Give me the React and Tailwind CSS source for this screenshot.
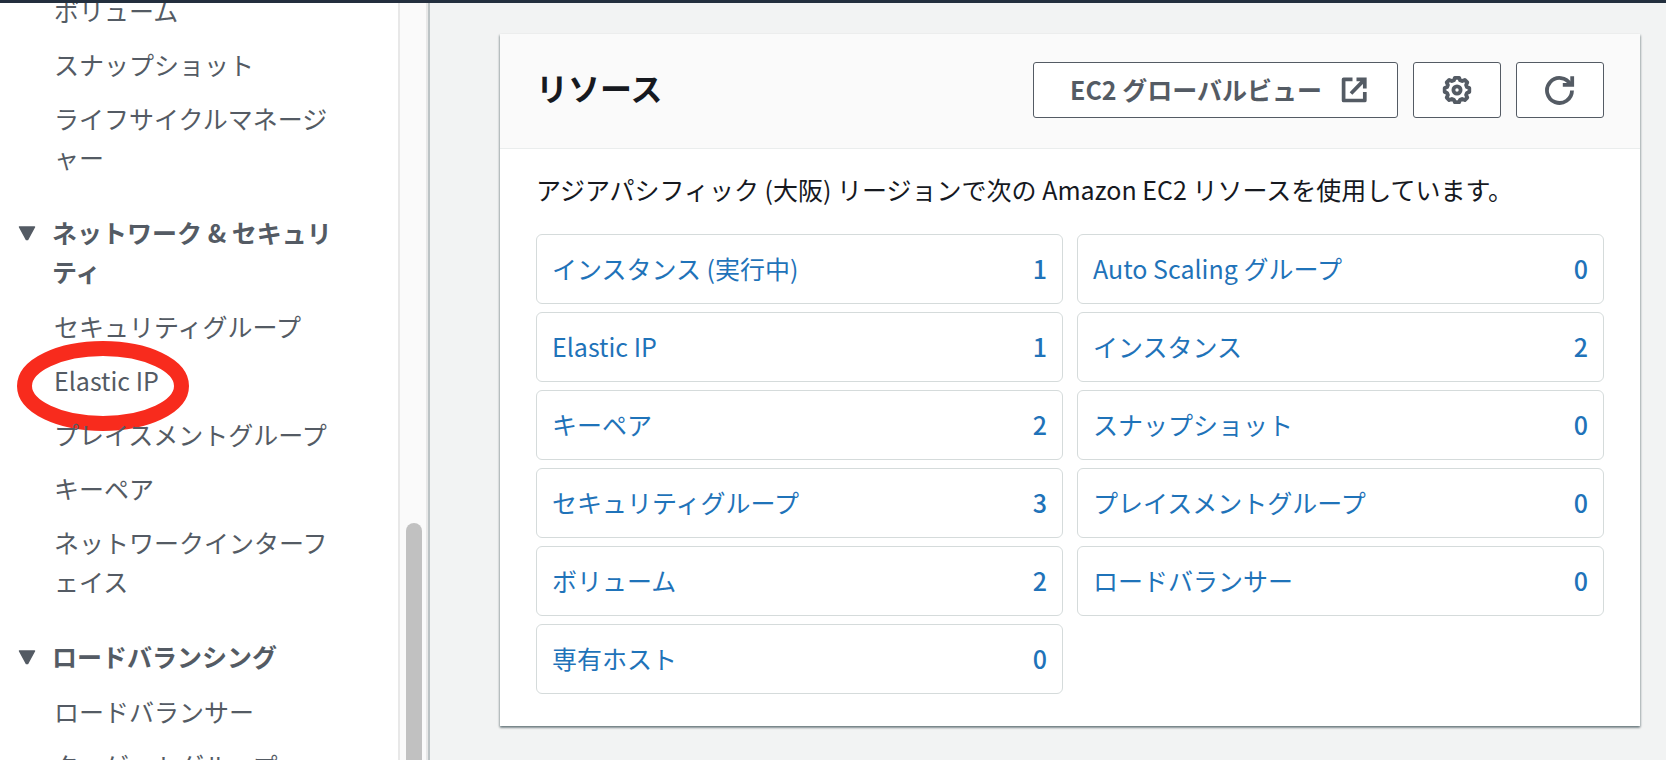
const sections = [
  {
    items: ['ボリューム', 'スナップショット', 'ライフサイクルマネージャー'],
  },
  {
    title: 'ネットワーク & セキュリティ',
    items: [
      'セキュリティグループ',
      'Elastic IP',
      'プレイスメントグループ',
      'キーペア',
      'ネットワークインターフェイス',
    ],
  },
  {
    title: 'ロードバランシング',
    items: ['ロードバランサー', 'ターゲットグループ'],
  },
];

const resources = [
  ['インスタンス (実行中)', 1],
  ['Auto Scaling グループ', 0],
  ['Elastic IP', 1],
  ['インスタンス', 2],
  ['キーペア', 2],
  ['スナップショット', 0],
  ['セキュリティグループ', 3],
  ['プレイスメントグループ', 0],
  ['ボリューム', 2],
  ['ロードバランサー', 0],
  ['専有ホスト', 0],
];

function Highlight() {
  return (
    <svg
      className="pointer-events-none absolute -top-5 -left-[37px] h-[90px] w-[172px]"
      viewBox="0 0 172 90"
      fill="none"
      aria-hidden="true"
    >
      <ellipse cx="86" cy="45" rx="78.5" ry="37.5" stroke="#f82b1d" strokeWidth="15" />
    </svg>
  );
}

function ExternalIcon() {
  return (
    <svg className="size-7" viewBox="0 0 28 28" fill="none" stroke="currentColor" strokeWidth="3.7" aria-hidden="true">
      <path d="M12.500 3.300H3.600v21.200h21.200V16" strokeLinejoin="round" />
      <path d="M16.500 3.300h8.300V12.500M24.500 3.600 11 17.500" />
    </svg>
  );
}

function GearIcon() {
  return (
    <svg className="size-8" viewBox="0 0 32 32" fill="none" stroke="currentColor" strokeWidth="3.800" strokeLinejoin="round" aria-hidden="true">
      <path d="M13.900 3.800h4.200l1 2.500 2 .8 2.700-1.200 2.500 2.500-1.200 2.700.8 2 2.400 1v3.800l-2.400 1-.8 2 1.200 2.700-2.500 2.500-2.700-1.200-2 .8-1 2.500h-4.200l-1-2.500-2-.8-2.700 1.200-2.500-2.500 1.200-2.700-.8-2-2.400-1v-3.800l2.400-1 .8-2-1.200-2.700 2.500-2.500 2.700 1.200 2-.8z" />
      <circle cx="16" cy="16" r="3.600" />
    </svg>
  );
}

function RefreshIcon() {
  return (
    <svg className="size-8" viewBox="0 0 32 32" fill="none" stroke="currentColor" strokeWidth="3.800" aria-hidden="true">
      <path d="M28 16.500A12.500 12.500 0 1 1 26.500 10.500" />
      <path d="M28.200 2.200V10.900H18.800" />
    </svg>
  );
}

function Sidebar() {
  return (
    <aside className="flex w-[430px] shrink-0 overflow-hidden border-r-2 border-[#bcc3c5] bg-white">
      <nav className="-mt-3 flex flex-1 flex-col gap-9 pr-[54px] pl-[18px] leading-[39px] text-[#545b64]">
        {sections.map((section, i) => (
          <section key={i}>
            {section.title && (
              <button type="button" className="mb-4 flex w-full items-start text-left font-bold">
                <svg className="mt-[13px] mr-4 h-[15px] w-[18px] shrink-0" viewBox="0 0 18 15" aria-hidden="true">
                  <path d="M1.500 1h15L9.600 13.600H8.400z" fill="#545b64" stroke="#545b64" strokeWidth="1.500" strokeLinejoin="round" />
                </svg>
                <span className="flex-1">{section.title}</span>
              </button>
            )}
            <ul className="flex flex-col gap-[15px] pl-9">
              {section.items.map((item) => (
                <li key={item} className="relative">
                  <a href="#" className="block">{item}</a>
                  {item === 'Elastic IP' && <Highlight />}
                </li>
              ))}
            </ul>
          </section>
        ))}
      </nav>
      <div className="w-[30px] border-r-2 border-l-2 border-[#e8e8e8] bg-[#fafafa] pt-[520px] pl-[6px]">
        <div className="h-[400px] w-4 rounded-full bg-[#c1c1c1]" />
      </div>
    </aside>
  );
}

const iconButton =
  'flex h-14 w-[88px] items-center justify-center rounded-[3px] border border-[#545b64] bg-white';

export default function App() {
  return (
    <div
      lang="ja"
      className="flex h-screen flex-col overflow-hidden bg-[#f2f3f3] font-['Noto_Sans_CJK_JP',sans-serif] text-[25px] text-[#16191f]"
    >
      <div className="h-[3px] shrink-0 bg-[#232f3e]" />
      <div className="flex min-h-0 flex-1">
        <Sidebar />
        <main className="min-w-0 flex-1 pt-[31px] pr-[26px] pl-[70px]">
          <section className="bg-white shadow-[0_2px_2px_0_rgba(0,28,36,0.35),1px_1px_2px_0_rgba(0,28,36,0.2),-1px_1px_2px_0_rgba(0,28,36,0.2)]">
            <header className="flex items-start justify-between border-b border-[#eaeded] bg-[#fafafa] px-9 pt-7 pb-[30px] text-[#545b64]">
              <h2 className="text-[32px] leading-[50px] font-bold text-[#16191f]">リソース</h2>
              <div className="flex gap-[15px]">
                <button
                  type="button"
                  className="flex h-14 items-center gap-[18px] rounded-[3px] border border-[#545b64] bg-white pr-[29px] pl-9 font-bold"
                >
                  EC2 グローバルビュー
                  <ExternalIcon />
                </button>
                <button type="button" aria-label="設定" className={iconButton}>
                  <GearIcon />
                </button>
                <button type="button" aria-label="更新" className={iconButton}>
                  <RefreshIcon />
                </button>
              </div>
            </header>
            <div className="px-9 pt-[21px] pb-8">
              <p className="mb-[25px] leading-[39px]">
                アジアパシフィック (大阪) リージョンで次の Amazon EC2 リソースを使用しています。
              </p>
              <ul className="grid grid-cols-2 gap-x-[14px] gap-y-2 text-[#1f73b9]">
                {resources.map(([name, count]) => (
                  <li key={name}>
                    <a
                      href="#"
                      className="flex h-[70px] items-center justify-between rounded-md border border-[#d5dbdb] px-[15px]"
                    >
                      <span>{name}</span>
                      <span className="font-medium">{count}</span>
                    </a>
                  </li>
                ))}
              </ul>
            </div>
          </section>
        </main>
      </div>
    </div>
  );
}
